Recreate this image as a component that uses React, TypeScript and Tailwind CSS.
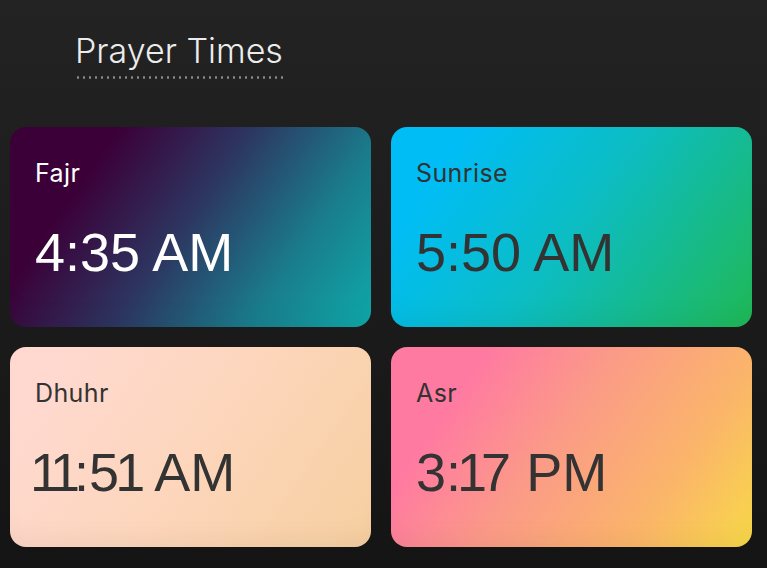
import React from "react";

type Prayer = {
  name: string;
  time: string;
  bg: string;
  text: string;
};

const prayers: Prayer[] = [
  {
    name: "Fajr",
    time: "4:35 AM",
    bg: "bg-[linear-gradient(125deg,#3b0038_22%,#2d3560_48%,#1a7c8c_75%,#0eaaaa_100%)]",
    text: "text-white",
  },
  {
    name: "Sunrise",
    time: "5:50 AM",
    bg: "bg-[linear-gradient(125deg,#00bdf6_15%,#0cbdc4_50%,#1cb96c_90%,#1eb955_100%)]",
    text: "text-[#333333]",
  },
  {
    name: "Dhuhr",
    time: "11:51 AM",
    bg: "bg-[linear-gradient(125deg,#ffd9d0_10%,#fdd6bd_50%,#f6cfa0_100%)]",
    text: "text-[#333333]",
  },
  {
    name: "Asr",
    time: "3:17 PM",
    bg: "bg-[linear-gradient(125deg,#ff7aa1_20%,#fb9a88_45%,#fbb56a_75%,#f8d947_100%)]",
    text: "text-[#333333]",
  },
];

// the "1" in the original face is narrow, tighten around it
function TimeText({ value }: { value: string }) {
  const chars = value.split("");
  return (
    <>
      {chars.map((c, i) => {
        const next = chars[i + 1];
        if (c === "1") {
          return (
            <span key={i} className={next === " " ? "tracking-[-3px]" : "tracking-[-6px]"}>
              1
            </span>
          );
        }
        if (next === "1" && c !== " ") {
          return (
            <span key={i} className="tracking-[-4px]">
              {c}
            </span>
          );
        }
        return c;
      })}
    </>
  );
}

function PrayerCard({ p }: { p: Prayer }) {
  const startsWithOne = p.time.startsWith("1");
  return (
    <div
      className={`h-[200px] rounded-2xl pl-[25px] pt-[31px] shadow-[inset_0_-24px_30px_-20px_rgba(0,0,0,0.06)] ${p.bg} ${p.text}`}
    >
      <div className="font-['Inter',sans-serif] text-[25px] leading-[30px] tracking-[0.4px]">{p.name}</div>
      <div
        className={`mt-[34px] whitespace-pre font-['Liberation_Sans',Arial,sans-serif] text-[54px] leading-[60px] ${
          startsWithOne ? "-ml-[5px]" : ""
        }`}
      >
        <TimeText value={p.time} />
      </div>
    </div>
  );
}

export default function App() {
  return (
    <div className="min-h-[568px] w-full bg-[linear-gradient(to_bottom,#232323,#141414)]">
      <div className="pl-[75px] pt-[29px]">
        <div className="inline-block">
          <h1 className="font-['Inter',sans-serif] text-[34px] font-light leading-[44px] text-[#ececec]">
            Prayer Times
          </h1>
          <div className="mt-[3px] h-[3px] w-full bg-[radial-gradient(circle,#8a8a8a_1px,transparent_1.4px)] bg-[length:6px_3px] bg-repeat-x" />
        </div>
      </div>
      <div className="grid grid-cols-[361px_361px] gap-x-5 gap-y-5 pl-2.5 pt-[48px] pb-5">
        {prayers.map((p) => (
          <PrayerCard key={p.name} p={p} />
        ))}
      </div>
    </div>
  );
}
